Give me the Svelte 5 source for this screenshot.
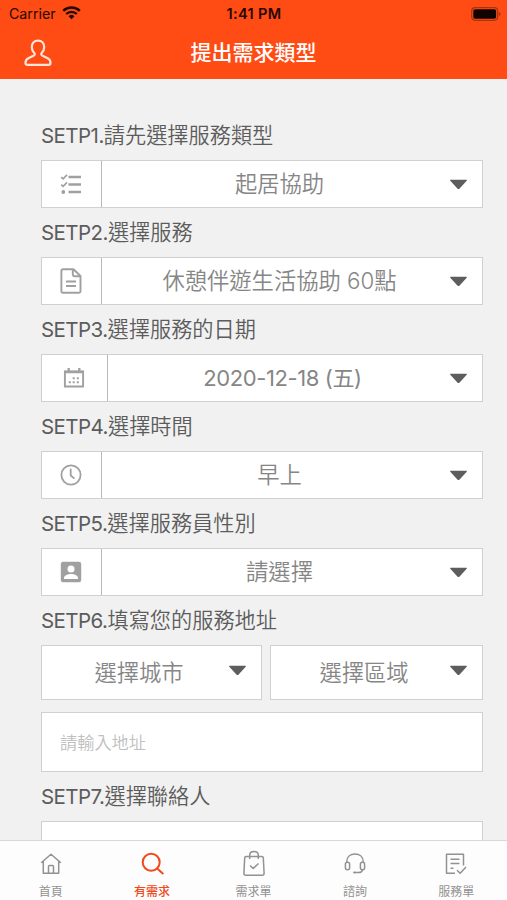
<script>
  const steps = [
    { label: 'SETP1.', text: '請先選擇服務類型', value: '起居協助', icon: 'list' },
    { label: 'SETP2.', text: '選擇服務', value: '休憩伴遊生活協助 60點', icon: 'doc' },
    { label: 'SETP3.', text: '選擇服務的日期', value: '2020-12-18 (五)', icon: 'calendar', wide: true },
    { label: 'SETP4.', text: '選擇時間', value: '早上', icon: 'clock' },
    { label: 'SETP5.', text: '選擇服務員性別', value: '請選擇', icon: 'person' }
  ];
  const tabs = [
    { name: '首頁', icon: 'home' },
    { name: '有需求', icon: 'search', active: true },
    { name: '需求單', icon: 'bag' },
    { name: '諮詢', icon: 'headset' },
    { name: '服務單', icon: 'form' }
  ];
</script>

{#snippet caret()}
  <svg class="caret" width="19" height="11" viewBox="0 0 19 11"><path d="M1.6.8h15.8q.9.2.3 1L10.400 9.700q-.9.8-1.800 0L1.300 1.800q-.6-.8.3-1z" fill="#5d5d5d" /></svg>
{/snippet}

<div class="screen">
  <header>
    <div class="status">
      <div class="carrier">
        <span>Carrier</span>
        <svg width="19" height="14" viewBox="0 0 19 14" fill="none" stroke="#240800">
          <path d="M1.200 4.900a11.800 11.800 0 0 1 16.600 0" stroke-width="2.500" />
          <path d="M4.200 8a7.500 7.500 0 0 1 10.600 0" stroke-width="2.300" />
          <path d="M9.500 13.200 6.600 10.300a4.100 4.100 0 0 1 5.800 0z" fill="#240800" stroke="none" />
        </svg>
      </div>
      <div class="time">1:41 PM</div>
      <div class="battery">
        <svg width="30" height="14" viewBox="0 0 30 14">
          <rect x=".7" y=".7" width="26" height="12.600" rx="3.500" fill="none" stroke="#a43510" stroke-width="1.200" />
          <rect x="2.300" y="2.300" width="22.800" height="9.400" rx="1.800" fill="#100400" />
          <path d="M27.900 5v4q1.600-.6 1.600-2t-1.600-2z" fill="#a43510" />
        </svg>
      </div>
    </div>
    <div class="nav">
      <svg class="user" width="28" height="28" viewBox="0 0 28 28" fill="none" stroke="#ffe4da" stroke-width="2.200" stroke-linejoin="round">
        <path d="M14 1.600c-4 0-6.200 2.700-6.200 6.300 0 2.500.9 4.500 2.500 6.100.9 1 .5 2.200-.8 2.800l-4.700 2.300C2.500 20.200 1.500 21.700 1.500 23.800c0 1.400.7 2.100 2 2.100h21c1.300 0 2-.7 2-2.100 0-2.100-1-3.600-3.300-4.700l-4.700-2.300c-1.300-.6-1.700-1.800-.8-2.800 1.600-1.600 2.500-3.600 2.500-6.100 0-3.600-2.200-6.300-6.200-6.300z" />
      </svg>
      <h1>提出需求類型</h1>
    </div>
  </header>

  <main>
    {#each steps as step}
      <div class="label"><span>{step.label}</span>{step.text}</div>
      <div class="field">
        <div class="symbol" class:wide={step.wide}>
          {#if step.icon === 'list'}
            <svg width="22" height="22" viewBox="0 0 22 22" fill="none" stroke="#a0a0a0">
              <path d="M8.500 4H21M8.500 11.500H21M8.500 19H21" stroke-width="2.600" />
              <path d="M1.200 4.100l1.900 1.800L7 1.900M1.200 11.600l1.900 1.800L7 9.400" stroke-width="1.600" />
              <circle cx="3.300" cy="19" r="1.900" fill="#a0a0a0" stroke="none" />
            </svg>
          {:else if step.icon === 'doc'}
            <svg width="22" height="26" viewBox="0 0 22 26" fill="none" stroke="#a0a0a0" stroke-width="1.900" stroke-linejoin="round">
              <path d="M3 1.200h10.500L20.500 8v15.200q0 1.500-1.500 1.500H3q-1.600 0-1.600-1.500V2.700Q1.400 1.200 3 1.200zM12.800 1.500v5.200q0 1.500 1.500 1.500h6M6 13.500h10M6 18h10" />
            </svg>
          {:else if step.icon === 'calendar'}
            <svg width="22" height="22" viewBox="0 0 22 22" fill="none" stroke="#a0a0a0">
              <path d="M1.900 4.500h18.200v15H1.900z" stroke-width="1.900" />
              <path d="M1 5h20M5.700 1v3M16.300 1v3" stroke-width="2.300" />
              <path d="M9.700 11.200h2M13.800 11.200h2M5.800 15.200h2M9.700 15.200h2M13.800 15.200h2" stroke-width="2" />
            </svg>
          {:else if step.icon === 'clock'}
            <svg width="22" height="22" viewBox="0 0 22 22" fill="none" stroke="#a0a0a0" stroke-width="1.800" stroke-linecap="round">
              <circle cx="11" cy="11" r="9.600" /><path d="M10.700 5.500V11.500l3.200 2.600" />
            </svg>
          {:else}
            <svg width="22" height="22" viewBox="0 0 22 22">
              <rect x=".8" y=".8" width="20.400" height="20.400" rx="2.200" fill="#a0a0a0" />
              <circle cx="11" cy="7.900" r="3.500" fill="#fff" />
              <path d="M4 18v-1.100c0-2.400 4.200-3.800 7-3.800s7 1.400 7 3.800V18z" fill="#fff" />
            </svg>
          {/if}
        </div>
        <div class="value" class:date={step.wide}>{step.value}</div>
        {@render caret()}
      </div>
    {/each}

    <div class="label"><span>SETP6.</span>填寫您的服務地址</div>
    <div class="area">
      <div class="field city"><div class="value">選擇城市</div>{@render caret()}</div>
      <div class="field district"><div class="value">選擇區域</div>{@render caret()}</div>
    </div>
    <div class="field address">請輸入地址</div>
    <div class="label"><span>SETP7.</span>選擇聯絡人</div>
    <div class="field contact"></div>
  </main>

  <footer>
    {#each tabs as tab}
      <div class="tab" class:active={tab.active}>
        <svg width="26" height="28" viewBox="0 0 26 28" fill="none" stroke="currentColor" stroke-width="1.500" stroke-linejoin="round">
          {#if tab.icon === 'home'}
            <path d="M3.200 12.700 13 4.200l9.800 8.500M5.300 11.500v11.700h15.400V11.500M10.500 23v-6.500q0-1 1-1h3q1 0 1 1V23" />
          {:else if tab.icon === 'search'}
            <g stroke-width="2"><circle cx="12.200" cy="12.300" r="8.500" /><path d="M18.200 18.500l5.500 5" stroke-linecap="round" /></g>
          {:else if tab.icon === 'bag'}
            <path d="M5.200 6.500h15.600q1.400 0 1.500 1.400l.8 15.300q0 2-2 2H4.900q-2 0-2-2l.8-15.300q.1-1.400 1.500-1.400zM8.700 9V5.200q0-3.800 4.300-3.800t4.300 3.800V9M9 15.500l3.200 3 5.300-5" />
          {:else if tab.icon === 'headset'}
            <path d="M4.700 12C4.700 6.800 8.400 4 13 4s8.300 2.800 8.300 8" />
            <rect x="3.400" y="12.200" width="4.200" height="7.600" rx="2" /><rect x="18.400" y="12.200" width="4.200" height="7.600" rx="2" />
            <path d="M20.500 20q-.5 2.500-3.800 2.500H13.500" /><ellipse cx="12.700" cy="22.500" rx="1.700" ry="1.100" fill="currentColor" stroke="none" />
          {:else}
            <path d="M12 23.200H3.500V4.200h17v11.300M7.500 9.300h9M7.500 13.500h9M7.500 18.200h3M14 20.200l3.200 3 5.800-6.200" />
          {/if}
        </svg>
        <span>{tab.name}</span>
      </div>
    {/each}
  </footer>
</div>

<style>
  .screen {
    display: flex;
    flex-direction: column;
    width: 507px;
    height: 900px;
    overflow: hidden;
    background: #f1f1f1;
    font-family: Inter, "Noto Sans CJK TC", sans-serif;
    color: #868686;
  }
  header {
    flex: none;
    box-sizing: border-box;
    height: 79px;
    background: #ff4b14;
  }
  .status {
    display: grid;
    grid-template-columns: 1fr auto 1fr;
    align-items: center;
    height: 27px;
    padding: 0 6px 0 9px;
    color: #240800;
    font-size: 14.200px;
    line-height: 27px;
  }
  .carrier {
    display: flex;
    align-items: center;
    gap: 6px;
  }
  .carrier svg { margin-bottom: 2px; }
  .time {
    margin-right: 2px;
    font-size: 14.500px;
    font-weight: 600;
    letter-spacing: .350px;
  }
  .battery {
    display: flex;
    justify-content: flex-end;
  }
  .nav {
    display: flex;
    align-items: center;
    height: 51px;
    padding: 0 24px;
  }
  h1 {
    flex: 1;
    margin: 0 28px 0 0;
    color: #fff;
    font-size: 21px;
    font-weight: 500;
    line-height: 50px;
    text-align: center;
  }
  main {
    flex: 1;
    min-height: 0;
    overflow: hidden;
    padding: 32px 24px 0 41px;
  }
  .label {
    height: 49px;
    color: #5c5c5c;
    font-size: 21.200px;
    font-weight: 350;
    line-height: 49px;
    white-space: nowrap;
  }
  .label span {
    font-size: 20.500px;
    font-weight: 400;
    letter-spacing: -.550px;
  }
  .field {
    display: flex;
    align-items: center;
    box-sizing: border-box;
    height: 48px;
    border: 1px solid #d0d0d0;
    background: #fff;
    font-size: 22.300px;
    font-weight: 350;
  }
  .symbol {
    display: flex;
    flex: none;
    align-items: center;
    justify-content: center;
    box-sizing: border-box;
    width: 60px;
    height: 100%;
    padding-right: 1px;
    border-right: 1px solid #b8b8b8;
  }
  .symbol.wide { width: 66px; }
  .value {
    flex: 1;
    padding-left: 8px;
    line-height: 46px;
    text-align: center;
    white-space: nowrap;
  }
  .value.date {
    font-size: 22px;
    font-weight: 400;
    letter-spacing: -.400px;
  }
  .caret {
    flex: none;
    margin-right: 14px;
  }
  .area {
    display: flex;
    gap: 8px;
    margin-bottom: 12px;
  }
  .area .field { height: 55px; }
  .area .caret { margin-bottom: 5px; }
  .city { width: 221px; }
  .district { flex: 1; }
  .address {
    height: 60px;
    padding: 0 0 2px 18px;
    color: #c0c0c0;
    font-size: 17.200px;
  }
  footer {
    display: flex;
    flex: none;
    box-sizing: border-box;
    height: 60px;
    border-top: 1px solid #d8d8d8;
    background: #fdfdfd;
  }
  .tab {
    display: flex;
    flex: 1;
    flex-direction: column;
    align-items: center;
    padding-top: 9px;
    color: #929292;
    font-size: 12px;
    font-weight: 400;
    line-height: 26px;
  }
  .tab svg {
    flex: none;
    margin-bottom: 1px;
  }
  .tab.active {
    color: #f04a1c;
    font-weight: 500;
  }
</style>
